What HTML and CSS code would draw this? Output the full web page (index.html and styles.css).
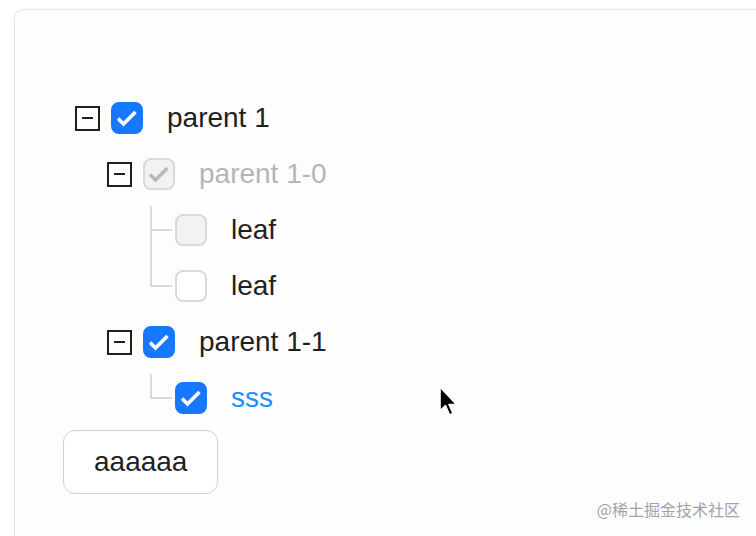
FILE: index.html
```html
<!DOCTYPE html>
<html lang="en">
<head>
  <title>Tree</title>
  <meta charset="UTF-8">
  <meta name="viewport" content="width=device-width, initial-scale=1">
  <link rel="stylesheet" href="styles.css">
</head>
<body>

  <div class="page">
    <div class="card">
      <div class="tree">
        <div class="tree-row">
          <span class="switcher"><span class="minus-box"></span></span>
          <span class="checkbox checked">
            <svg class="check" viewBox="0 0 32 32"><path d="M7 16.5 L12.5 22 L24.5 10"/></svg>
          </span>
          <span class="title">parent 1</span>
        </div>

        <div class="tree-row">
          <span class="indent"></span>
          <span class="switcher"><span class="minus-box"></span></span>
          <span class="checkbox checked disabled">
            <svg class="check" viewBox="0 0 32 32"><path d="M7 16.5 L12.5 22 L24.5 10"/></svg>
          </span>
          <span class="title disabled">parent 1-0</span>
        </div>

        <div class="tree-row">
          <span class="indent"></span>
          <span class="indent"></span>
          <span class="switcher leaf"></span>
          <span class="checkbox disabled"></span>
          <span class="title">leaf</span>
        </div>

        <div class="tree-row">
          <span class="indent"></span>
          <span class="indent"></span>
          <span class="switcher leaf last"></span>
          <span class="checkbox"></span>
          <span class="title">leaf</span>
        </div>

        <div class="tree-row">
          <span class="indent"></span>
          <span class="switcher"><span class="minus-box"></span></span>
          <span class="checkbox checked">
            <svg class="check" viewBox="0 0 32 32"><path d="M7 16.5 L12.5 22 L24.5 10"/></svg>
          </span>
          <span class="title">parent 1-1</span>
        </div>

        <div class="tree-row">
          <span class="indent"></span>
          <span class="indent"></span>
          <span class="switcher leaf last"></span>
          <span class="checkbox checked">
            <svg class="check" viewBox="0 0 32 32"><path d="M7 16.5 L12.5 22 L24.5 10"/></svg>
          </span>
          <span class="title link">sss</span>
        </div>
      </div>

      <button class="btn" type="button">aaaaaa</button>
    </div>
  </div>

  <!-- mouse pointer over the page -->
  <svg class="cursor" width="22" height="34" viewBox="0 0 22 34">
    <path d="M2 1 L2 25 L7.5 19.5 L11.5 29 L15 27.5 L11 18.5 L18.5 18.5 Z" fill="#000" stroke="#fff" stroke-width="1.6" stroke-linejoin="round"/>
  </svg>

  <div class="watermark">@稀土掘金技术社区</div>

</body>
</html>
```

FILE: styles.css
```css
* {
  box-sizing: border-box;
}

body {
  margin: 0;
  font-family: "Liberation Sans", Arial, sans-serif;
  background-color: #fff;
  height: 100vh;
  overflow: hidden;
}

.page {
  padding: 9px 0 0 14px;
  height: 100%;
}

.card {
  margin-right: -20px;
  height: calc(100% + 20px);
  padding: 84px 0 0 48px;
  background-color: #fdfdfe;
  border: 1px solid #e6e6e8;
  border-radius: 9px 0 0 0;
}

/* tree rows: 48px content + 8px gap */
.tree-row {
  display: flex;
  align-items: flex-start;
  height: 56px;
  padding-bottom: 8px;
}

.indent {
  flex: none;
  width: 32px;
  height: 48px;
}

.switcher {
  flex: none;
  position: relative;
  width: 48px;
  height: 48px;
  display: flex;
  justify-content: center;
  align-items: center;
}

.minus-box {
  position: relative;
  width: 25px;
  height: 25px;
  border: 2px solid #1f1f1f;
}

.minus-box::after {
  content: "";
  position: absolute;
  left: 5px;
  right: 5px;
  top: 9.5px;
  height: 2px;
  background-color: #1f1f1f;
}

/* connector lines for leaf nodes */
.switcher.leaf::before {
  content: "";
  position: absolute;
  left: 23px;
  top: 0;
  width: 2px;
  height: 56px;
  background-color: #d9d9d9;
}

.switcher.leaf.last::before {
  height: 25px;
}

.switcher.leaf::after {
  content: "";
  position: absolute;
  left: 23px;
  top: 23px;
  width: 22px;
  height: 2px;
  background-color: #d9d9d9;
}

.checkbox {
  flex: none;
  position: relative;
  width: 32px;
  height: 32px;
  margin-top: 8px;
  border: 2px solid #d9d9d9;
  border-radius: 8px;
  background-color: #fff;
}

.checkbox.disabled {
  background-color: #f2f2f2;
}

.checkbox.checked {
  background-color: #1677ff;
  border-color: #1677ff;
}

.checkbox.checked.disabled {
  background-color: #f2f2f2;
  border-color: #d9d9d9;
}

.check {
  position: absolute;
  left: -2px;
  top: -2px;
  width: 32px;
  height: 32px;
  fill: none;
  stroke: #fff;
  stroke-width: 3.6;
  stroke-linejoin: miter;
}

.checkbox.disabled .check {
  stroke: #b8b8b8;
}

.title {
  margin-left: 16px;
  padding: 0 8px;
  font-size: 28px;
  line-height: 48px;
  color: #1f1f1f;
  white-space: nowrap;
}

.title.disabled {
  color: #b5b5b5;
}

.title.link {
  color: #1890ff;
}

.btn {
  display: block;
  height: 64px;
  padding: 0 30px;
  font-family: "Liberation Sans", Arial, sans-serif;
  font-size: 28px;
  color: #1f1f1f;
  background-color: #fff;
  border: 1px solid #d2d2d2;
  border-radius: 12px;
}

.cursor {
  position: absolute;
  left: 438px;
  top: 386px;
}

.watermark {
  position: absolute;
  right: 16px;
  bottom: 15px;
  font-family: "Noto Sans CJK SC", "Liberation Sans", sans-serif;
  font-size: 16px;
  color: #a3a3a3;
}
```
